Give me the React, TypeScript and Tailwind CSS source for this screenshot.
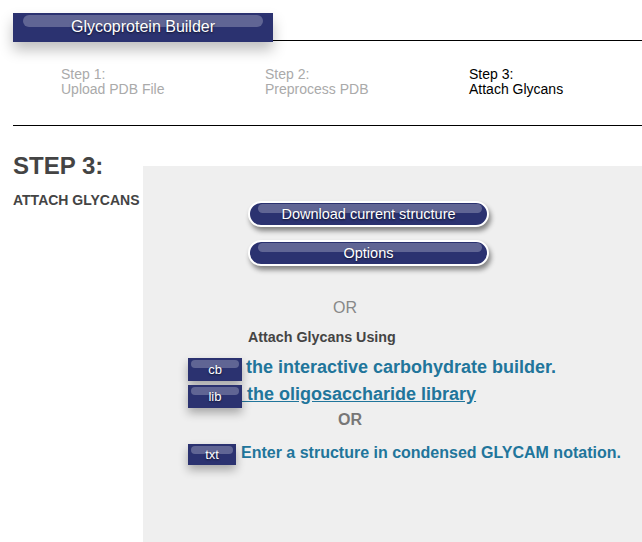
const navy = 'bg-[#2b3270]';

const PillButton = ({ label, gap }: { label: string; gap: string }) => (
  <button
    className={`relative ${gap} ml-[60px] block h-[26px] w-[241px] rounded-full border-2 border-white ${navy} text-[14.5px] leading-[21px] text-white shadow-[2px_4px_5px_rgba(0,0,0,0.45)] [text-shadow:0_1px_2px_rgba(0,0,0,0.6)]`}
  >
    <span className="absolute left-[8px] right-[5px] top-[1px] h-[9px] rounded-full bg-white/25" />
    <span className="relative">{label}</span>
  </button>
);

const SmallButton = ({ label, w, h }: { label: string; w: string; h: string }) => (
  <button
    className={`relative shrink-0 ${w} ${h} ${navy} text-[13px] leading-[21px] text-white shadow-[0_5px_10px_rgba(0,0,0,0.3)] [text-shadow:0_1px_2px_rgba(0,0,0,0.6)]`}
  >
    <span className="absolute left-[3px] right-[3px] top-[2px] h-[8px] rounded-full bg-white/25" />
    <span className="relative">{label}</span>
  </button>
);

const steps = [
  { n: 'Step 1:', t: 'Upload PDB File', active: false },
  { n: 'Step 2:', t: 'Preprocess PDB', active: false },
  { n: 'Step 3:', t: 'Attach Glycans', active: true },
];

export default function App() {
  return (
    <div className="min-h-[542px] overflow-hidden bg-white font-['Liberation_Sans',Arial,sans-serif]">
      {/* title bar */}
      <div className="ml-[13px] mt-[13px] flex items-end">
        <div className={`relative z-10 h-[29px] w-[260px] shrink-0 ${navy} pt-[5px] text-center text-[16px] leading-[18px] text-white shadow-[0_8px_14px_rgba(0,0,0,0.25)] [text-shadow:0_1px_2px_rgba(0,0,0,0.6)]`}>
          <span className="absolute left-[10px] right-[10px] top-[2px] h-[12px] rounded-full bg-white/25" />
          <span className="relative">Glycoprotein Builder</span>
        </div>
        <div className="mb-px h-px flex-1 bg-black" />
      </div>

      {/* steps */}
      <div className="ml-[13px] flex border-b border-black pb-[28px] pl-[48px] pt-[25px] text-[14px] leading-[15px]">
        {steps.map((s) => (
          <div key={s.n} className={`w-[204px] shrink-0 ${s.active ? 'text-black' : 'text-[#aaaaaa]'}`}>
            {s.n}
            <br />
            {s.t}
          </div>
        ))}
      </div>

      <div className="flex">
        <div className="w-[143px] shrink-0 pl-[13px] pt-[26px] text-[#444444]">
          <h2 className="text-[24px] font-bold leading-[28px]">STEP 3:</h2>
          <h3 className="mt-[12px] whitespace-nowrap text-[14px] font-bold leading-[16px]">ATTACH GLYCANS</h3>
        </div>

        <div className="mt-[40px] min-h-[400px] flex-1 bg-[#efefef] pl-[45px]">
          <PillButton label="Download current structure" gap="mt-[35px]" />
          <PillButton label="Options" gap="mt-[13px]" />

          <p className="ml-[145px] mt-[33px] text-[16px] leading-[18px] text-[#888888]">OR</p>
          <p className="ml-[60px] mt-[12px] text-[14.3px] font-bold leading-[16px] text-[#444444]">Attach Glycans Using</p>

          <div className="mt-[13px] flex items-start">
            <SmallButton label="cb" w="w-[54px]" h="h-[23px]" />
            <a href="#" className="-mt-[2px] ml-[4px] text-[18px] font-bold leading-[22px] text-[#21759b]">
              the interactive carbohydrate builder.
            </a>
          </div>
          <div className="mt-[4px] flex items-start">
            <SmallButton label="lib" w="w-[54px]" h="h-[23px]" />
            <a href="#" className="-mt-[2px] text-[18px] font-bold leading-[22px] text-[#21759b] underline">
              {'\u00a0the oligosaccharide library'}
            </a>
          </div>

          <p className="ml-[150px] mt-[3px] text-[16px] font-bold leading-[18px] text-[#777777]">OR</p>

          <div className="mt-[15px] flex items-start">
            <SmallButton label="txt" w="w-[48px]" h="h-[21px]" />
            <a href="#" className="ml-[5px] text-[16px] font-bold leading-[18px] text-[#21759b]">
              Enter a structure in condensed GLYCAM notation.
            </a>
          </div>
        </div>
      </div>
    </div>
  );
}
